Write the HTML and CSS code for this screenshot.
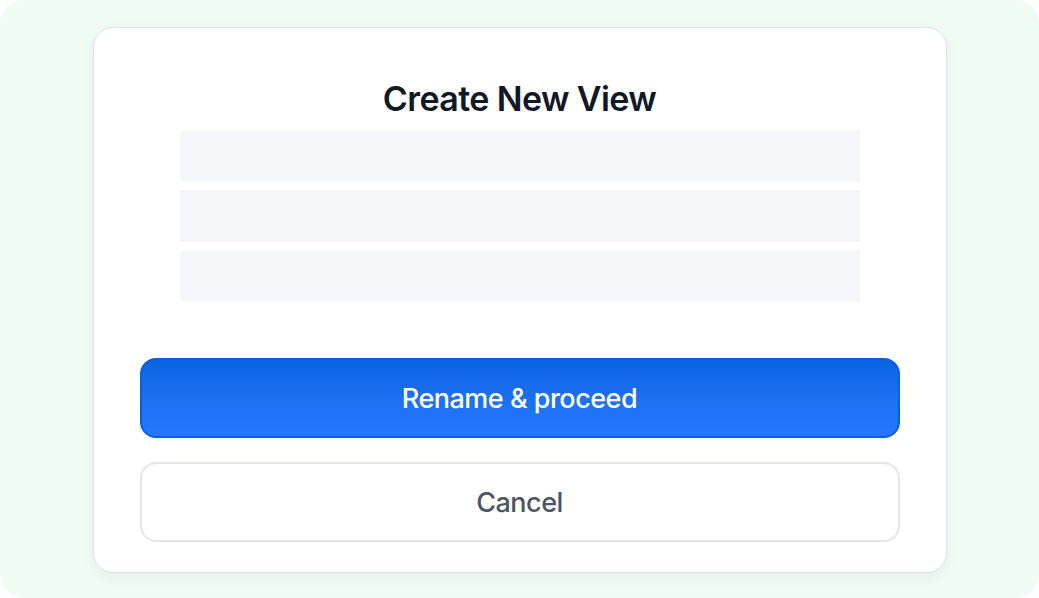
FILE: index.html
```html
<!DOCTYPE html>
<html lang="en">
<head>
<meta charset="utf-8">
<title>Create New View</title>
<link rel="stylesheet" href="styles.css">
</head>
<body>
<div class="stage">
  <div class="card">
    <h1 class="title">Create New View</h1>
    <div class="rows">
      <div class="row"></div>
      <div class="row"></div>
      <div class="row"></div>
    </div>
    <div class="actions">
      <button class="btn btn-primary">Rename &amp; proceed</button>
      <button class="btn btn-secondary">Cancel</button>
    </div>
  </div>
</div>
</body>
</html>
```
FILE: styles.css
```css
html, body {
  margin: 0;
  padding: 0;
  background: #ffffff;
}
body {
  font-family: Inter, "Noto Sans", "Liberation Sans", sans-serif;
}
.stage {
  width: 1039px;
  height: 598px;
  box-sizing: border-box;
  padding-top: 2px;
  border-radius: 24px;
  background: #effbf3;
  display: flex;
  align-items: center;
  justify-content: center;
}
.card {
  width: 854px;
  box-sizing: border-box;
  background: #ffffff;
  border: 1px solid #dde0e8;
  border-radius: 20px;
  box-shadow: 0 4px 14px rgba(30, 60, 40, 0.06);
  padding: 51px 46px 30px;
  display: flex;
  flex-direction: column;
}
.title {
  margin: 0;
  font-size: 34px;
  line-height: 40px;
  font-weight: 600;
  color: #111827;
  text-align: center;
  letter-spacing: -0.6px;
}
.rows {
  width: 680px;
  margin: 11px auto 0;
  display: flex;
  flex-direction: column;
  gap: 8px;
}
.row {
  height: 52px;
  background: #f5f6fa;
}
.actions {
  margin-top: 56px;
  display: flex;
  flex-direction: column;
  gap: 24px;
}
.btn {
  height: 80px;
  width: 100%;
  box-sizing: border-box;
  border-radius: 16px;
  font-family: inherit;
  font-size: 27px;
  font-weight: 550;
  letter-spacing: -0.5px;
  cursor: pointer;
}
.btn-primary {
  color: #ffffff;
  border: 2px solid #0a5fdc;
  background: linear-gradient(180deg, #0a63e3 0%, #1c70f2 50%, #2479fc 100%);
}
.btn-secondary {
  color: #4b5563;
  background: #ffffff;
  border: 2px solid #e2e5ea;
}
```
